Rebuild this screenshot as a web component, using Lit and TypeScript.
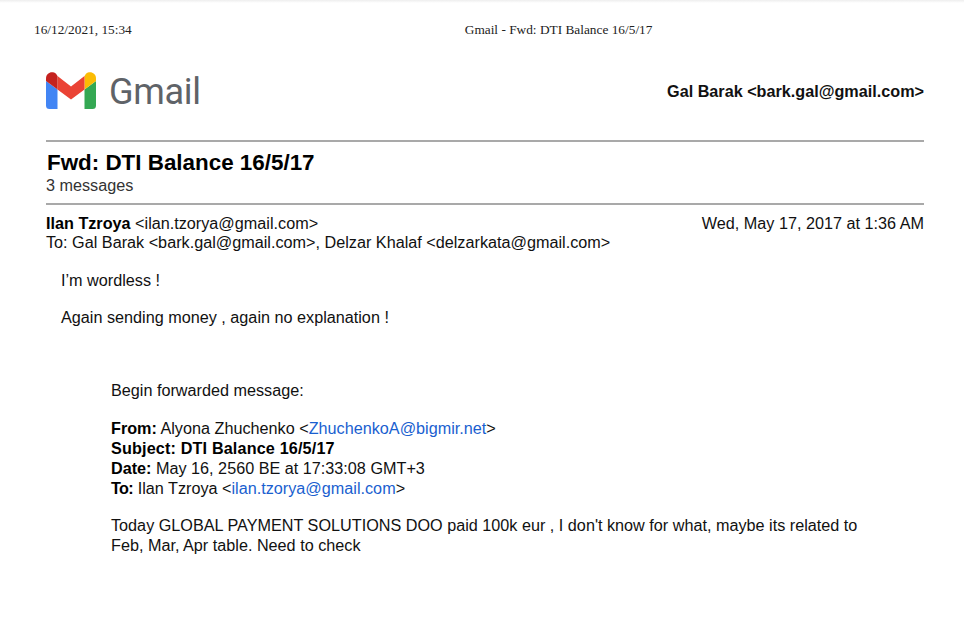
import { LitElement, html, css } from "lit";
import { customElement } from "lit/decorators.js";

@customElement("app-root")
export class AppRoot extends LitElement {
  static styles = css`
    :host { display: block; width: 964px; height: 617px; background: #fff; overflow: hidden; font-family: "Liberation Sans", Arial, sans-serif; color: #111; }
    .topshade { height: 3px; background: linear-gradient(#eeeeee, #ffffff); }
    .print { display: flex; gap: 333px; padding: 19px 0 0 34px; font: 13.33px/15px "Liberation Serif", serif; color: #222; height: 20px; white-space: nowrap; }
    .page { padding: 0 40px 0 46px; }
    .brand { display: flex; justify-content: space-between; align-items: center; height: 56px; margin-top: 21px; }
    .logo { display: flex; align-items: center; gap: 13px; }
    .wordmark { font: 400 36px/44px Roboto, sans-serif; color: #5f6368; letter-spacing: -0.3px; margin-top: 2px; }
    .acct { font-size: 16.2px; font-weight: 700; }
    .rule { height: 2px; background: #a9a9a9; }
    .r1 { margin-top: 21px; }
    h1 { margin: 8px 0 0; padding-left: 1px; font-size: 22.4px; line-height: 26px; font-weight: 700; color: #000; }
    .count { font-size: 16.22px; line-height: 19px; margin: 0 0 8px; color: #333; }
    .meta { display: flex; justify-content: space-between; font-size: 16.22px; line-height: 19px; margin-top: 9px; }
    .to { font-size: 16.22px; line-height: 18px; }
    .body { font-size: 16.22px; line-height: 19px; padding-left: 15px; }
    .body p { margin: 0; }
    .p1 { margin-top: 20px !important; }
    .p2 { margin-top: 18px !important; }
    .fwd { padding-left: 50px; margin-top: 54px; }
    .hdr { margin-top: 18px; line-height: 20px; }
    .subject { letter-spacing: 0.15px; }
    .tight { letter-spacing: -0.6px; }
    .msg { margin-top: 17px !important; line-height: 20px; }
    a { color: #1a5fd0; text-decoration: none; }
    b { font-weight: 700; color: #000; }
  `;

  render() {
    return html`
      <div class="topshade"></div>
      <div class="print"><span>16/12/2021, 15:34</span><span>Gmail - Fwd: DTI Balance 16/5/17</span></div>
      <div class="page">
        <div class="brand">
          <div class="logo">
            <svg width="50" height="38" viewBox="0 0 50 38" aria-hidden="true">
              <path d="M0 9 V33.5 A3.5 3.5 0 0 0 3.5 37 H11.5 V17.5 Z" fill="#4285f4"/>
              <path d="M38.5 17.5 V37 H46.5 A3.5 3.5 0 0 0 50 33.5 V9 Z" fill="#34a853"/>
              <path d="M38.5 4 V17.5 L50 9 V6.5 C50 1 44 -1.5 40 1.8 Z" fill="#fbbc04"/>
              <path d="M11.5 17.5 V4 L25 14.5 L38.5 4 V17.5 L25 27.5 Z" fill="#ea4335"/>
              <path d="M0 6.5 V9 L11.5 17.5 V4 L10 1.8 C6 -1.5 0 1 0 6.5 Z" fill="#c5221f"/>
            </svg>
            <span class="wordmark">Gmail</span>
          </div>
          <div class="acct">Gal Barak &lt;bark.gal@gmail.com&gt;</div>
        </div>
        <div class="rule r1"></div>
        <h1>Fwd: DTI Balance 16/5/17</h1>
        <div class="count">3 messages</div>
        <div class="rule"></div>
        <div class="meta"><span><b>Ilan Tzroya</b> &lt;ilan.tzorya@gmail.com&gt;</span><span>Wed, May 17, 2017 at 1:36 AM</span></div>
        <div class="to">To: Gal Barak &lt;bark.gal@gmail.com&gt;, Delzar Khalaf &lt;delzarkata@gmail.com&gt;</div>
        <div class="body">
          <p class="p1">I’m wordless !</p>
          <p class="p2">Again sending money , again no explanation !</p>
          <div class="fwd">
            <p>Begin forwarded message:</p>
            <div class="hdr">
              <div><b>From:</b> Alyona Zhuchenko &lt;<a>ZhuchenkoA@bigmir.net</a>&gt;</div>
              <div class="subject"><b>Subject: DTI Balance 16/5/17</b></div>
              <div><b>Date:</b> May 16, 2560 BE at 17:33:08 GMT+3</div>
              <div><b class="tight">To:</b> Ilan Tzroya &lt;<a>ilan.tzorya@gmail.com</a>&gt;</div>
            </div>
            <p class="msg">Today GLOBAL PAYMENT SOLUTIONS DOO paid 100k eur , I don't know for what, maybe its related to<br>Feb, Mar, Apr table. Need to check</p>
          </div>
        </div>
      </div>
    `;
  }
}
